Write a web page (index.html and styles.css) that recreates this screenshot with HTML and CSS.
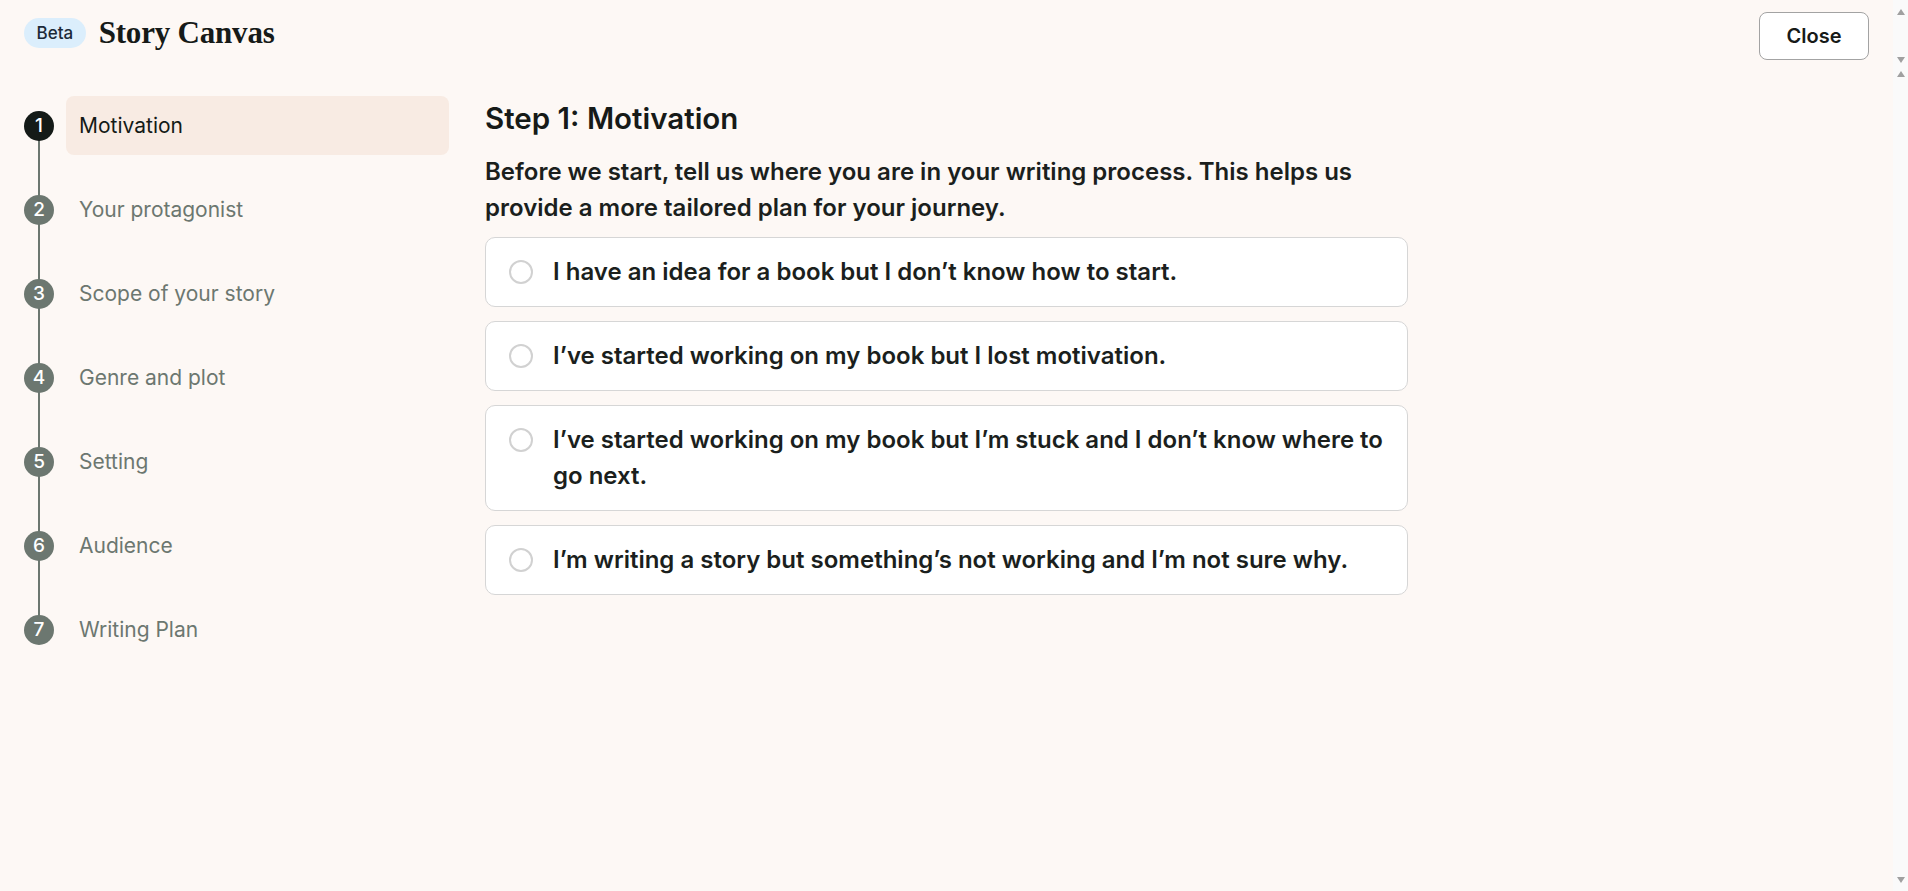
FILE: index.html
```html
<!DOCTYPE html>
<html lang="en">
<head>
<meta charset="utf-8">
<title>Story Canvas</title>
<link rel="stylesheet" href="styles.css">
</head>
<body>
<div class="pane pane-top">
  <header class="header">
    <div class="brand">
      <span class="badge">Beta</span>
      <h1 class="title">Story Canvas</h1>
    </div>
    <button class="close-btn">Close</button>
  </header>
  <div class="sbar sbar-top"><span class="arrow up"></span><span class="arrow down"></span></div>
</div>
<div class="pane pane-main">
  <main class="main">
    <nav class="steps">
      <div class="step active"><span class="num">1</span><span class="label">Motivation</span></div>
      <div class="step"><span class="num">2</span><span class="label">Your protagonist</span></div>
      <div class="step"><span class="num">3</span><span class="label">Scope of your story</span></div>
      <div class="step"><span class="num">4</span><span class="label">Genre and plot</span></div>
      <div class="step"><span class="num">5</span><span class="label">Setting</span></div>
      <div class="step"><span class="num">6</span><span class="label">Audience</span></div>
      <div class="step"><span class="num">7</span><span class="label">Writing Plan</span></div>
    </nav>
    <section class="content">
      <h2 class="heading">Step 1: Motivation</h2>
      <p class="intro">Before we start, tell us where you are in your writing process. This helps us provide a more tailored plan for your journey.</p>
      <div class="options">
        <label class="option"><span class="radio"></span><span class="opt-text">I have an idea for a book but I don’t know how to start.</span></label>
        <label class="option"><span class="radio"></span><span class="opt-text">I’ve started working on my book but I lost motivation.</span></label>
        <label class="option"><span class="radio"></span><span class="opt-text">I’ve started working on my book but I’m stuck and I don’t know where to go next.</span></label>
        <label class="option"><span class="radio"></span><span class="opt-text">I’m writing a story but something’s not working and I’m not sure why.</span></label>
      </div>
    </section>
  </main>
  <div class="sbar sbar-main"><span class="arrow up"></span><span class="arrow down"></span></div>
</div>
</body>
</html>
```
FILE: styles.css
```css
html, body {
  margin: 0;
  height: 100%;
  overflow: hidden;
}
body {
  display: flex;
  flex-direction: column;
  background: #fdf8f5;
  font-family: Inter, "Noto Sans", sans-serif;
  color: #1b1f1d;
}
.pane {
  display: flex;
}
.pane-top {
  flex: 0 0 70px;
}
.pane-main {
  flex: 1;
  min-height: 0;
}
.sbar {
  flex: 0 0 15px;
  width: 15px;
  background: #fafafa;
  display: flex;
  flex-direction: column;
  justify-content: space-between;
  align-items: center;
}
.sbar-top {
  padding: 9px 0 7px;
}
.sbar-main {
  padding: 1px 0 8px;
}
.arrow {
  width: 0;
  height: 0;
  border-left: 4.5px solid transparent;
  border-right: 4.5px solid transparent;
}
.arrow.up {
  border-bottom: 6px solid #a0a0a0;
}
.arrow.down {
  border-top: 6px solid #a0a0a0;
}
.header {
  flex: 1;
  display: flex;
  justify-content: space-between;
  align-items: flex-start;
  padding: 0 24px;
}
.brand {
  display: flex;
  align-items: center;
  gap: 13px;
  margin-top: 18px;
}
.badge {
  display: inline-flex;
  align-items: center;
  justify-content: center;
  height: 30px;
  padding: 0 12.5px;
  border-radius: 15px;
  background: #dbeefc;
  color: #1b2a38;
  font-size: 17px;
  font-weight: 500;
}
.title {
  margin: 0;
  font-family: "Liberation Serif", serif;
  font-weight: 700;
  font-size: 31px;
  line-height: 30px;
  color: #161a18;
  letter-spacing: -0.2px;
}
.close-btn {
  margin-top: 12px;
  width: 110px;
  height: 48px;
  border: 1px solid #a3a3a3;
  border-radius: 8px;
  background: #ffffff;
  font-family: Inter, sans-serif;
  font-size: 20px;
  font-weight: 600;
  color: #161a18;
}
.main {
  flex: 1;
  display: flex;
  align-items: flex-start;
  gap: 36px;
  padding: 26px 0 0 24px;
}
.steps {
  display: flex;
  flex-direction: column;
  gap: 25px;
}
.step {
  position: relative;
  display: flex;
  align-items: center;
  gap: 12px;
  height: 59px;
}
.step:not(:last-child)::after {
  content: "";
  position: absolute;
  left: 14px;
  top: 29px;
  width: 2px;
  height: 84px;
  background: #6c7770;
}
.num {
  position: relative;
  z-index: 1;
  width: 30px;
  height: 30px;
  border-radius: 50%;
  background: #6c7770;
  color: #ffffff;
  font-size: 19px;
  font-weight: 500;
  display: flex;
  align-items: center;
  justify-content: center;
}
.label {
  width: 383px;
  height: 59px;
  box-sizing: border-box;
  padding-left: 13px;
  border-radius: 8px;
  display: flex;
  align-items: center;
  font-size: 21px;
  color: #6c7770;
}
.step.active .num {
  background: #141a17;
}
.step.active .label {
  background: #f8ebe3;
  color: #141a17;
}
.content {
  width: 923px;
  padding-top: 4px;
}
.heading {
  margin: 0;
  font-size: 29.5px;
  line-height: 36px;
  font-weight: 600;
  color: #161a18;
}
.intro {
  margin: 18px 0 11px;
  font-size: 24px;
  line-height: 36px;
  font-weight: 600;
  color: #1b1f1d;
}
.options {
  display: flex;
  flex-direction: column;
  gap: 14px;
}
.option {
  display: flex;
  align-items: flex-start;
  gap: 20px;
  padding: 16px 24px 16px 23px;
  background: #ffffff;
  border: 1px solid #d6d6d6;
  border-radius: 10px;
}
.radio {
  flex: 0 0 auto;
  width: 24px;
  height: 24px;
  box-sizing: border-box;
  border: 2px solid #d1d1d1;
  border-radius: 50%;
  margin-top: 6px;
}
.opt-text {
  font-size: 24px;
  line-height: 36px;
  font-weight: 600;
  color: #1b1f1d;
}
```
